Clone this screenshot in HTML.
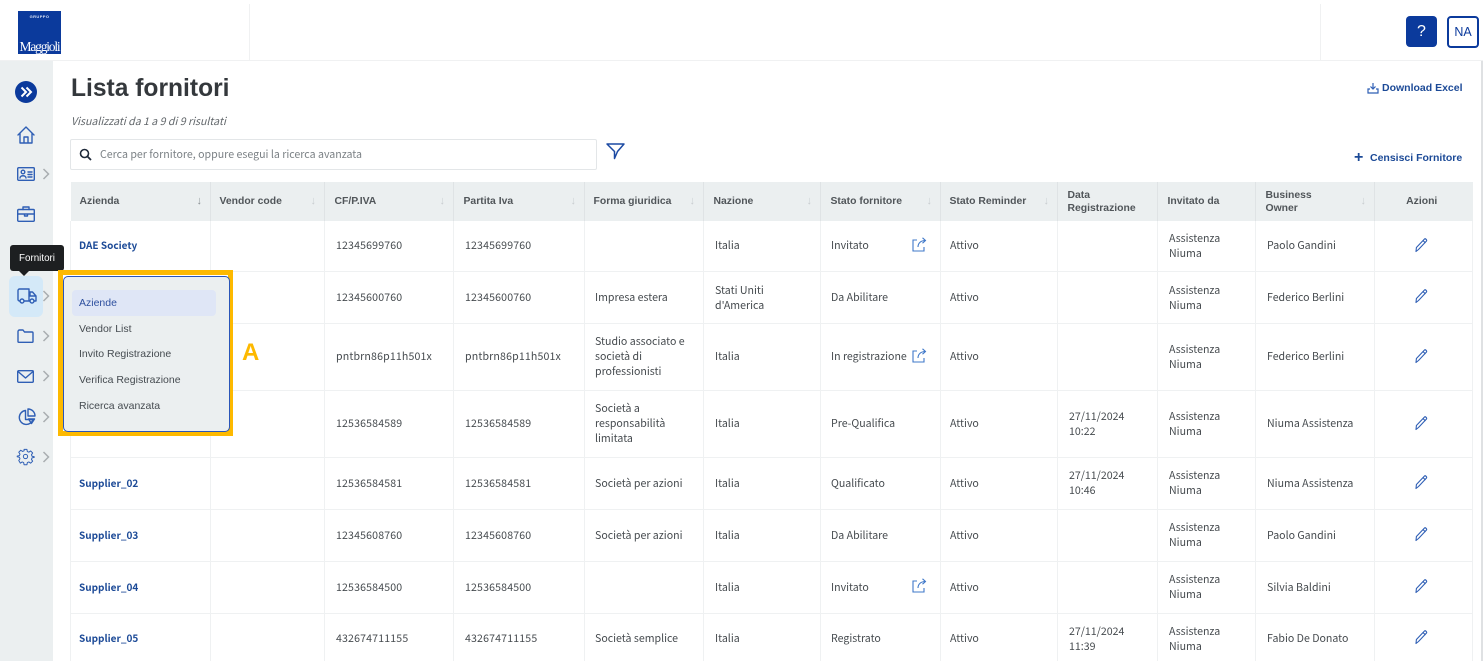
<!DOCTYPE html>
<html lang="it"><head><meta charset="utf-8"><title>Lista fornitori</title>
<style>
html,body{margin:0;padding:0;background:#fff}
#p{position:relative;width:1483px;height:661px;overflow:hidden;background:#fff;font-family:"Noto Sans CJK JP","Liberation Sans",sans-serif;color:#3a3f45}
.a{position:absolute}
.h{font-family:"Liberation Sans",sans-serif}
table{position:absolute;left:70px;top:182px;width:1402px;border-collapse:collapse;table-layout:fixed}
th{background:#ebeff0;height:39px;padding:0 9.5px;text-align:left;font:bold 10.4px/13px "Liberation Sans",sans-serif;color:#51565a;border-right:1px solid #dfe3e5;position:relative;box-sizing:border-box}
th:first-child{padding-left:9px}
th:nth-child(2),th:nth-child(5),th:nth-child(8){padding-left:8.5px}
th:last-child{border-right:0;text-align:center;padding:0 13px 0 9px}
th i{position:absolute;right:8px;top:13px;font:normal 11px/12px "Liberation Sans",sans-serif;color:#c9cdd0}
th:first-child i{color:#8d9296}
td{padding:0 10px 0 11px;font-size:10.6px;line-height:15px;color:#454a4e;border:1px solid #eff1f2;border-width:0 1px 1px 1px;box-sizing:border-box;position:relative;vertical-align:middle}
td:first-child{padding-left:8px;padding-bottom:2px;font-weight:bold;color:#1c4a97;font-size:10px}
td:nth-child(3),td:nth-child(4){letter-spacing:.15px}
td:nth-child(5),td:nth-child(7){padding-left:10px}
td:nth-child(8){padding-left:9px}
td svg.e{position:absolute;left:50%;top:50%;margin:-9px 0 0 -10.500px}
td svg.s{position:absolute;right:13px;top:50%;margin-top:-9px}
.d{padding-top:2px}
svg{display:block;overflow:visible}
.ic{position:absolute;fill:none;stroke:#2f5fb5;stroke-width:1.4;stroke-linecap:round;stroke-linejoin:round}
.ch{position:absolute;left:42px;width:8px;height:12px;fill:none;stroke:#a9aeb1;stroke-width:1.5}
.m{position:absolute;left:79px;font:10.5px/14px "Liberation Sans",sans-serif;color:#454b50}
</style></head><body><div id="p">

<!-- top bar -->
<div class="a" style="left:0;top:60px;width:1483px;height:1px;background:#f0f1f2"></div>
<div class="a" style="left:249px;top:4px;width:1px;height:56px;background:#f0f1f2"></div>
<div class="a" style="left:1320px;top:4px;width:1px;height:56px;background:#f0f1f2"></div>
<div class="a" style="left:18px;top:11px;width:43px;height:43px;background:#0b3a9c;overflow:hidden">
  <div class="a h" style="left:0;top:3px;width:43px;text-align:center;font-size:4px;line-height:5px;font-weight:bold;letter-spacing:.4px;color:#dbe3f5">GRUPPO</div>
  <div class="a" style="left:0;top:28px;width:43px;text-align:center;font:13.5px/16px 'Liberation Serif',serif;color:#fff;letter-spacing:-1.2px">Maggioli</div>
</div>
<div class="a h" style="left:1406px;top:16px;width:31px;height:31px;background:#0b3a9c;border-radius:4px;color:#fff;text-align:center;font-size:16px;line-height:31px">?</div>
<div class="a h" style="left:1447px;top:16px;width:32px;height:32px;box-sizing:border-box;border:2px solid #0b3a9c;border-radius:4px;color:#0b3a9c;text-align:center;font-size:12.500px;line-height:28px">NA</div>

<!-- sidebar -->
<div class="a" style="left:0;top:61px;width:53px;height:600px;background:#ebeff0"></div>
<svg class="a" style="left:15px;top:81px" width="22" height="22" viewBox="0 0 22 22"><circle cx="11" cy="11" r="11" fill="#0b3a9c"/><path d="M6.500 6.500 11 11l-4.500 4.500M11.500 6.500 16 11l-4.500 4.500" fill="none" stroke="#fff" stroke-width="2"/></svg>
<svg class="ic" style="left:17px;top:126px" width="18" height="18" viewBox="0 0 18 18"><path d="M1 9 9 1l8 8M3 7.500V17h12V7.500M7 17v-6h4v6"/></svg>
<svg class="ic" style="left:17px;top:167px" width="18" height="14" viewBox="0 0 18 14"><rect x=".7" y=".7" width="16.600" height="12.600" rx="1"/><circle cx="6" cy="5" r="1.800"/><path d="M3 11c0-3 6-3 6 0M11 5h4M11 7.500h4M11 10h4"/></svg>
<svg class="ic" style="left:17px;top:206px" width="18" height="16" viewBox="0 0 18 16"><rect x=".7" y="3.500" width="16.600" height="11.800" rx="1"/><path d="M6 3.500V1h6v2.500M.7 8h16.600M7.500 8v2h3V8"/></svg>
<div class="a" style="left:9px;top:276px;width:34px;height:41px;background:#d4e9f8;border-radius:6px"></div>
<svg class="ic" style="left:17px;top:288px" width="20" height="16" viewBox="0 0 20 16"><path d="M3 13H2.500A1.500 1.500 0 0 1 1 11.500V2.500A1.500 1.500 0 0 1 2.500 1H12v12H7M12 4h3.500l3.500 4v5h-2M12 13h1M13 4v4h6"/><circle cx="5" cy="13" r="2"/><circle cx="15" cy="13" r="2"/></svg>
<svg class="ic" style="left:17px;top:329px" width="17" height="14" viewBox="0 0 17 14"><path d="M1 2.500A1.500 1.500 0 0 1 2.500 1H6l1.500 2h7.500A1 1 0 0 1 16 4v8.500a.8.8 0 0 1-.8.8H1.800a.8.8 0 0 1-.8-.8z"/></svg>
<svg class="ic" style="left:17px;top:370px" width="17" height="13" viewBox="0 0 17 13"><rect x=".7" y=".7" width="15.600" height="11.600" rx="1"/><path d="M1 1.500 8.500 8 16 1.500"/></svg>
<svg class="ic" style="left:18px;top:408px" width="18" height="18" viewBox="0 0 18 18"><path d="M7.500 2.500a7 7 0 1 0 7.500 9H7.500z"/><path d="M10 1a7 7 0 0 1 7 7h-7zM10.500 11h6l-3 4.500z"/></svg>
<svg class="ic" style="left:17px;top:448px" width="17" height="17" viewBox="0 0 24 24" stroke-width="2"><circle cx="12" cy="12" r="3"/><path d="M10 2h4l.6 3 2.100.9 2.600-1.700 2.800 2.800-1.700 2.600.9 2.100 3 .6v1l-3 .6-.9 2.100 1.700 2.600-2.800 2.800-2.600-1.700-2.100.9-.6 3h-4l-.6-3-2.100-.9-2.600 1.700L2.500 17.700l1.700-2.600-.9-2.100-3-.6v-1l3-.6.9-2.100L2.500 6l2.800-2.800 2.600 1.700 2.100-.9z"/></svg>
<svg class="ch" style="top:168px" viewBox="0 0 8 12"><path d="M1.500 1 6.500 6l-5 5"/></svg>
<svg class="ch" style="top:290px" viewBox="0 0 8 12"><path d="M1.500 1 6.500 6l-5 5"/></svg>
<svg class="ch" style="top:330px" viewBox="0 0 8 12"><path d="M1.500 1 6.500 6l-5 5"/></svg>
<svg class="ch" style="top:370px" viewBox="0 0 8 12"><path d="M1.500 1 6.500 6l-5 5"/></svg>
<svg class="ch" style="top:411px" viewBox="0 0 8 12"><path d="M1.500 1 6.500 6l-5 5"/></svg>
<svg class="ch" style="top:451px" viewBox="0 0 8 12"><path d="M1.500 1 6.500 6l-5 5"/></svg>

<!-- heading -->
<div class="a h" style="left:71px;top:73px;font-size:24.600px;line-height:32px;font-weight:bold;color:#34383c">Lista fornitori</div>
<div class="a" style="left:71px;top:114px;font-size:10.600px;line-height:16px;font-style:italic;color:#62676b">Visualizzati da 1 a 9 di 9 risultati</div>
<div class="a" style="left:70px;top:139px;width:527px;height:31px;box-sizing:border-box;border:1px solid #e3e6e8;border-radius:2px;background:#fff"></div>
<svg class="a" style="left:79px;top:148px" width="13" height="13" viewBox="0 0 13 13"><circle cx="5.500" cy="5.500" r="4" fill="none" stroke="#1f2a3a" stroke-width="1.600"/><path d="M8.500 8.500 12 12" stroke="#1f2a3a" stroke-width="1.800"/></svg>
<div class="a" style="left:100px;top:147px;font-size:10.630px;line-height:16px;color:#7b8185">Cerca per fornitore, oppure esegui la ricerca avanzata</div>
<svg class="a" style="left:606px;top:143px" width="19" height="17" viewBox="0 0 19 17"><path d="M1 1h17l-6.500 7.500-3 7V8.500z" fill="none" stroke="#1c4aa3" stroke-width="1.500" stroke-linejoin="round"/></svg>
<svg class="a" style="left:1367px;top:82px" width="12" height="12" viewBox="0 0 12 12"><path d="M6 1v6M3.500 4.500 6 7l2.500-2.500M3 7H1v4h10V7H9" fill="none" stroke="#2f5fb5" stroke-width="1.200"/></svg>
<div class="a h" style="left:1382px;top:82px;font-size:10.500px;line-height:13px;font-weight:bold;color:#1c4a97">Download Excel</div>
<div class="a h" style="left:1354px;top:149px;font-size:16px;line-height:18px;font-weight:bold;color:#1c4a97">+</div>
<div class="a h" style="left:1370px;top:152px;font-size:10.500px;line-height:13px;font-weight:bold;color:#1c4a97">Censisci Fornitore</div>

<!-- table -->
<table>
<colgroup><col style="width:140px"><col style="width:114px"><col style="width:129px"><col style="width:131px"><col style="width:119px"><col style="width:117px"><col style="width:120px"><col style="width:117px"><col style="width:100px"><col style="width:98px"><col style="width:119px"><col style="width:98px"></colgroup>
<tr><th>Azienda<i>↓</i></th><th>Vendor code<i>↓</i></th><th>CF/P.IVA<i>↓</i></th><th>Partita Iva<i>↓</i></th><th>Forma giuridica<i>↓</i></th><th>Nazione<i>↓</i></th><th>Stato fornitore<i>↓</i></th><th>Stato Reminder<i>↓</i></th><th>Data<br>Registrazione</th><th>Invitato da</th><th>Business<br>Owner<i>↓</i></th><th>Azioni</th></tr>

<tr style="height:50px"><td>DAE Society</td><td></td><td>12345699760</td><td>12345699760</td><td></td><td>Italia</td><td>Invitato<svg class="s" width="16" height="16" viewBox="0 0 16 16"><path d="M6 3H2v11h11v-4M7 10c0-4 3-6.500 7.500-6.500M11.500.8l3 2.700-3 2.700" fill="none" stroke="#3f78c9" stroke-width="1.100"/></svg></td><td>Attivo</td><td></td><td>Assistenza<br>Niuma</td><td>Paolo Gandini</td><td><svg class="e" width="16" height="16" viewBox="0 0 16 16"><path d="M3 14.500l.4-4L11.500 2c.8-.8 2.700 1 2 2L5.500 12.500zM10 3.500l2.500 2.500" fill="none" stroke="#2f5fb5" stroke-width="1.100" stroke-linejoin="round"/></svg></td></tr>

<tr style="height:52px"><td></td><td></td><td>12345600760</td><td>12345600760</td><td>Impresa estera</td><td class="d">Stati Uniti<br>d'America</td><td>Da Abilitare</td><td>Attivo</td><td></td><td class="d">Assistenza<br>Niuma</td><td>Federico Berlini</td><td><svg class="e" width="16" height="16" viewBox="0 0 16 16"><path d="M3 14.500l.4-4L11.500 2c.8-.8 2.700 1 2 2L5.500 12.500zM10 3.500l2.500 2.500" fill="none" stroke="#2f5fb5" stroke-width="1.100" stroke-linejoin="round"/></svg></td></tr>

<tr style="height:67px"><td></td><td></td><td>pntbrn86p11h501x</td><td>pntbrn86p11h501x</td><td>Studio associato e<br>società di<br>professionisti</td><td>Italia</td><td>In registrazione<svg class="s" width="16" height="16" viewBox="0 0 16 16"><path d="M6 3H2v11h11v-4M7 10c0-4 3-6.500 7.500-6.500M11.500.8l3 2.700-3 2.700" fill="none" stroke="#3f78c9" stroke-width="1.100"/></svg></td><td>Attivo</td><td></td><td>Assistenza<br>Niuma</td><td>Federico Berlini</td><td><svg class="e" width="16" height="16" viewBox="0 0 16 16"><path d="M3 14.500l.4-4L11.500 2c.8-.8 2.700 1 2 2L5.500 12.500zM10 3.500l2.500 2.500" fill="none" stroke="#2f5fb5" stroke-width="1.100" stroke-linejoin="round"/></svg></td></tr>

<tr style="height:67px"><td></td><td></td><td>12536584589</td><td>12536584589</td><td>Società a<br>responsabilità<br>limitata</td><td>Italia</td><td>Pre-Qualifica</td><td>Attivo</td><td>27/11/2024<br>10:22</td><td>Assistenza<br>Niuma</td><td>Niuma Assistenza</td><td><svg class="e" width="16" height="16" viewBox="0 0 16 16"><path d="M3 14.500l.4-4L11.500 2c.8-.8 2.700 1 2 2L5.500 12.500zM10 3.500l2.500 2.500" fill="none" stroke="#2f5fb5" stroke-width="1.100" stroke-linejoin="round"/></svg></td></tr>

<tr style="height:52px"><td>Supplier_02</td><td></td><td>12536584581</td><td>12536584581</td><td>Società per azioni</td><td>Italia</td><td>Qualificato</td><td>Attivo</td><td>27/11/2024<br>10:46</td><td>Assistenza<br>Niuma</td><td>Niuma Assistenza</td><td><svg class="e" width="16" height="16" viewBox="0 0 16 16"><path d="M3 14.500l.4-4L11.500 2c.8-.8 2.700 1 2 2L5.500 12.500zM10 3.500l2.500 2.500" fill="none" stroke="#2f5fb5" stroke-width="1.100" stroke-linejoin="round"/></svg></td></tr>

<tr style="height:52px"><td>Supplier_03</td><td></td><td>12345608760</td><td>12345608760</td><td>Società per azioni</td><td>Italia</td><td>Da Abilitare</td><td>Attivo</td><td></td><td>Assistenza<br>Niuma</td><td>Paolo Gandini</td><td><svg class="e" width="16" height="16" viewBox="0 0 16 16"><path d="M3 14.500l.4-4L11.500 2c.8-.8 2.700 1 2 2L5.500 12.500zM10 3.500l2.500 2.500" fill="none" stroke="#2f5fb5" stroke-width="1.100" stroke-linejoin="round"/></svg></td></tr>

<tr style="height:52px"><td>Supplier_04</td><td></td><td>12536584500</td><td>12536584500</td><td></td><td>Italia</td><td>Invitato<svg class="s" width="16" height="16" viewBox="0 0 16 16"><path d="M6 3H2v11h11v-4M7 10c0-4 3-6.500 7.500-6.500M11.500.8l3 2.700-3 2.700" fill="none" stroke="#3f78c9" stroke-width="1.100"/></svg></td><td>Attivo</td><td></td><td>Assistenza<br>Niuma</td><td>Silvia Baldini</td><td><svg class="e" width="16" height="16" viewBox="0 0 16 16"><path d="M3 14.500l.4-4L11.500 2c.8-.8 2.700 1 2 2L5.500 12.500zM10 3.500l2.500 2.500" fill="none" stroke="#2f5fb5" stroke-width="1.100" stroke-linejoin="round"/></svg></td></tr>

<tr style="height:50px"><td>Supplier_05</td><td></td><td>432674711155</td><td>432674711155</td><td>Società semplice</td><td>Italia</td><td>Registrato</td><td>Attivo</td><td class="d">27/11/2024<br>11:39</td><td class="d">Assistenza<br>Niuma</td><td>Fabio De Donato</td><td><svg class="e" width="16" height="16" viewBox="0 0 16 16"><path d="M3 14.500l.4-4L11.500 2c.8-.8 2.700 1 2 2L5.500 12.500zM10 3.500l2.500 2.500" fill="none" stroke="#2f5fb5" stroke-width="1.100" stroke-linejoin="round"/></svg></td></tr>
</table>
<div class="a" style="left:1481px;top:61px;width:2px;height:600px;background:#dfe1e3"></div>

<!-- tooltip -->
<div class="a h" style="left:10px;top:245px;width:54px;height:26px;background:#1d1f21;border-radius:3px;color:#fff;font-size:9.800px;line-height:27px;text-align:center">Fornitori</div>
<div class="a" style="left:19px;top:271px;width:0;height:0;border:5px solid transparent;border-top-color:#1d1f21;border-bottom:0"></div>

<!-- popup -->
<div class="a" style="left:58px;top:270px;width:175px;height:166px;box-sizing:border-box;border:5px solid #fdb900;background:#fff"></div>
<div class="a" style="left:63px;top:276px;width:167px;height:156px;box-sizing:border-box;border:1.500px solid #2a55b8;border-radius:5px;background:#ebeff0"></div>
<div class="a" style="left:72px;top:290px;width:144px;height:26px;background:#dfe6f6;border-radius:4px"></div>
<div class="m" style="top:296px;color:#2d4f9e">Aziende</div>
<div class="m" style="top:322px">Vendor List</div>
<div class="m" style="top:347px">Invito Registrazione</div>
<div class="m" style="top:373px">Verifica Registrazione</div>
<div class="m" style="top:399px">Ricerca avanzata</div>
<div class="a h" style="left:242px;top:338px;font-size:24px;line-height:30px;font-weight:bold;color:#fdb900">A</div>
</div></body></html>
